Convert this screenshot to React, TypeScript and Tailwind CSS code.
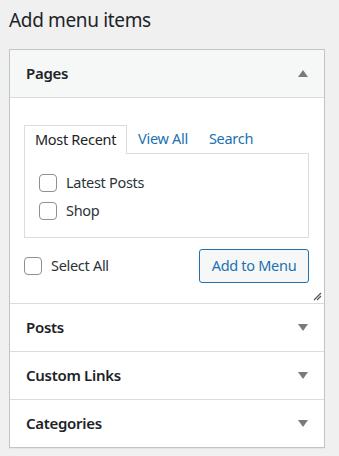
import React from 'react';

const font = { fontFamily: '"Noto Sans", "Open Sans", sans-serif' };

const Arrow = ({ up }: { up?: boolean }) => (
  <svg width="10" height="7" viewBox="0 0 10 7" className="shrink-0">
    {up ? <path d="M5 0 L10 7 L0 7 Z" fill="#787c82" /> : <path d="M0 0 L10 0 L5 7 Z" fill="#787c82" />}
  </svg>
);

const Box = () => (
  <span className="block w-[18px] h-[18px] shrink-0 rounded-[4px] border border-[#8c8f94] bg-white" />
);

const Section = ({ title }: { title: string }) => (
  <div className="h-[48px] border-t border-[#dcdcde] flex items-center justify-between pl-[16px] pr-[16px]">
    <span className="text-[15px] tracking-[-0.3px] font-semibold text-[#1d2327]">{title}</span>
    <Arrow />
  </div>
);

export default function App() {
  return (
    <div className="w-[339px] h-[456px] bg-[#f0f0f1] overflow-hidden" style={font}>
      <h2 className="pl-[9px] pt-[5px] h-[49px] text-[19px] tracking-[-0.35px] leading-[30px] font-normal text-[#1d2327]">Add menu items</h2>
      <div className="ml-[9px] w-[316px] border border-[#c3c4c7] bg-white shadow-[0_1px_1px_rgba(0,0,0,0.04)]">
        <div className="h-[48px] bg-[#f6f7f7] border-b border-[#dcdcde] flex items-center justify-between pl-[16px] pr-[16px]">
          <span className="text-[15px] tracking-[-0.3px] font-semibold text-[#1d2327]">Pages</span>
          <Arrow up />
        </div>
        <div className="relative h-[205px] pt-[27px] pl-[14px] pr-[15px] text-[14.5px] tracking-[-0.3px]">
          <div className="flex h-[28px]">
            <div className="relative z-10 px-[10px] border border-b-0 border-[#dcdcde] bg-white h-[29px] flex items-center text-[#1d2327]">Most Recent</div>
            <div className="px-[11px] flex items-center text-[#2271b1]">View All</div>
            <div className="px-[10px] flex items-center text-[#2271b1]">Search</div>
          </div>
          <div className="h-[85px] border border-[#dcdcde] pt-[20px] pl-[14px] flex flex-col gap-[10px]">
            <label className="flex items-center gap-[9px] text-[#2c3338] h-[18px]"><Box />Latest Posts</label>
            <label className="flex items-center gap-[9px] text-[#2c3338] h-[18px]"><Box />Shop</label>
          </div>
          <div className="mt-[11px] flex items-center justify-between">
            <label className="flex items-center gap-[9px] text-[#2c3338]"><Box />Select All</label>
            <button className="h-[34px] w-[110px] rounded-[3px] border border-[#2271b1] bg-[#f6f7f7] text-[#2271b1]">Add to Menu</button>
          </div>
          <svg width="9" height="9" viewBox="0 0 9 9" className="absolute right-[2px] bottom-[2px]">
            <path d="M1 8 L8 1 M4 8 L8 4" stroke="#50575e" strokeWidth="1.2" />
          </svg>
        </div>
        <Section title="Posts" />
        <Section title="Custom Links" />
        <Section title="Categories" />
      </div>
    </div>
  );
}
